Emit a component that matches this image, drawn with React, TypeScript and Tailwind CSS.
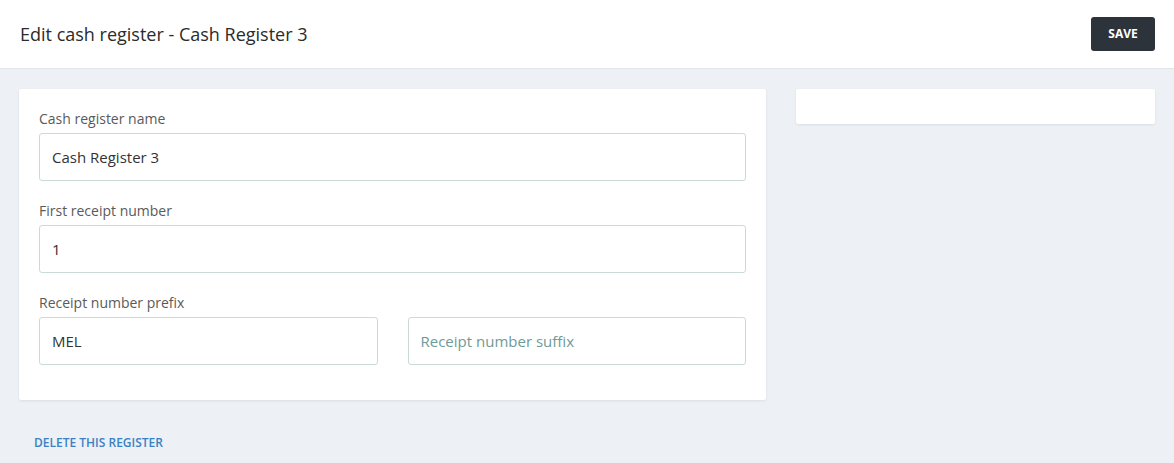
const font = { fontFamily: '"Open Sans", "Liberation Sans", sans-serif' };

type FieldProps = {
  value?: string;
  placeholder?: string;
};

const Field = ({ value, placeholder }: FieldProps) => (
  <input
    readOnly
    defaultValue={value}
    placeholder={placeholder}
    className="h-12 w-full rounded-[3px] border border-[#cbdad9] bg-white px-3 text-[15px] text-[#333] outline-none placeholder:text-[#6f9a97]"
  />
);

const Label = ({ children }: { children: React.ReactNode }) => (
  <label className="mb-1 block text-[14px] leading-5 text-[#5a5a5a]">{children}</label>
);

const App = () => (
  <div className="min-h-[463px] bg-[#edf0f5]" style={font}>
    <header className="flex h-[69px] items-center justify-between border-b border-[#e1e4e8] bg-white pl-5 pr-[19px]">
      <h1 className="text-[18px] text-[#2b2b2b]">Edit cash register - Cash Register 3</h1>
      <button className="h-[34px] w-16 rounded-[3px] bg-[#2d333b] text-[12px] font-bold text-white">
        SAVE
      </button>
    </header>

    <main className="flex items-start gap-[30px] pl-[19px] pr-[19px] pt-5">
      <div className="flex-1">
        <div className="rounded-[2px] bg-white px-5 pb-[35px] pt-5 shadow-[0_1px_3px_rgba(0,0,0,0.08)]">
          <Label>Cash register name</Label>
          <Field value="Cash Register 3" />

          <div className="mt-5">
            <Label>First receipt number</Label>
            <Field value="1" />
          </div>

          <div className="mt-5">
            <Label>Receipt number prefix</Label>
            <div className="grid grid-cols-2 gap-[30px]">
              <Field value="MEL" />
              <Field placeholder="Receipt number suffix" />
            </div>
          </div>
        </div>

        <button className="mt-[34px] pl-[15px] text-[12px] font-semibold text-[#3a80c4]">
          DELETE THIS REGISTER
        </button>
      </div>

      <aside className="h-[35px] w-[359px] rounded-[2px] bg-white shadow-[0_1px_3px_rgba(0,0,0,0.08)]" />
    </main>
  </div>
);

export default App;
